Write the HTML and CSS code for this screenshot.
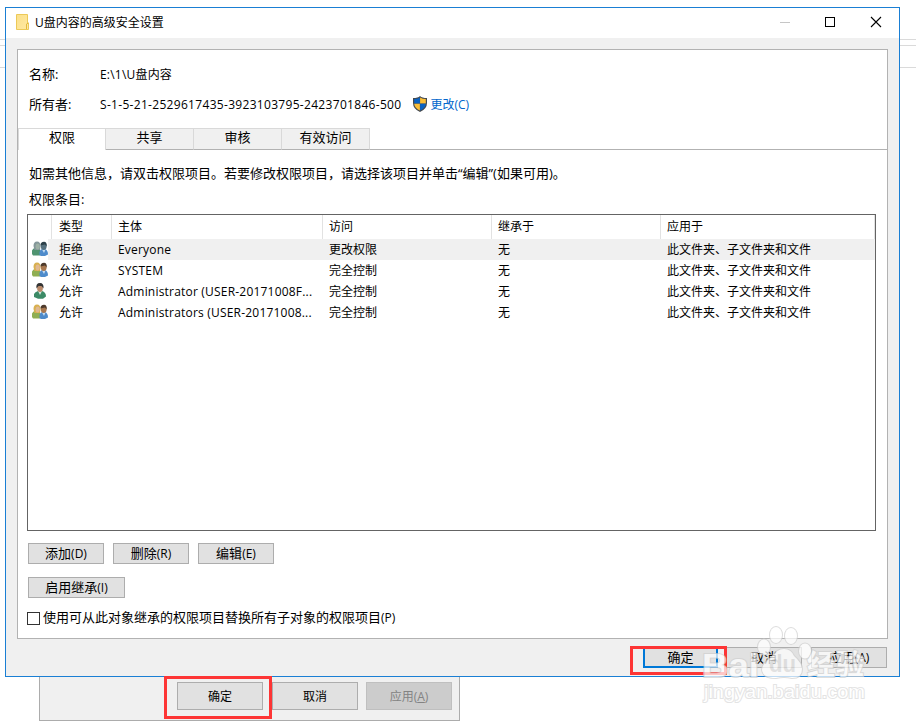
FILE: index.html
```html
<!DOCTYPE html>
<html lang="zh-CN">

<head>
    <meta charset="UTF-8">
    <meta name="viewport" content="width=device-width, initial-scale=1.0">
    <title>U盘内容的高级安全设置</title>
    <link rel="stylesheet" href="styles.css">
</head>

<body>
    <svg class="defs" width="0" height="0">
        <defs>
            <linearGradient id="folderFill" x1="0" y1="0" x2="1" y2="1">
                <stop offset="0" stop-color="#fbe08a" />
                <stop offset="1" stop-color="#ffe9a2" />
            </linearGradient>
            <symbol id="group" viewBox="0 0 16 16">
                <path d="M0 13V9.500Q1 7 3 7H6.500Q9 8 8.500 14.500H1z" fill="var(--shirt)" />
                <path d="M7.500 14V11Q8 8.500 10 8H13Q16 9 16 13.500L13 15H9z" fill="#4e8bcb" />
                <path d="M10 8.500L12 12L13.500 8.500z" fill="#c4dcf0" />
                <path d="M1.500 5Q1.500 .5 5 .5Q8.500 .5 8.500 5L8 9H2.500z" fill="var(--hair)" />
                <ellipse cx="5.700" cy="5.500" rx="2.100" ry="2.900" fill="var(--face)" />
                <ellipse cx="11.700" cy="5.200" rx="2.900" ry="3.800" fill="var(--face2)" />
                <path d="M8.500 4.500Q8.500 .8 12 .8Q15.200 1 14.700 5.500L13 3.500z" fill="var(--hair2)" />
            </symbol>
            <symbol id="person" viewBox="0 0 16 16">
                <path d="M2 14V11Q3 9 6 8H10Q14 9 14 13.500L11 15.800H6z" fill="#3c8a66" />
                <path d="M6 8L8 12L10 8z" fill="#d5e8de" />
                <ellipse cx="8" cy="5" rx="2.900" ry="4" fill="#b98a6a" />
                <path d="M4.500 5.500Q3.500 0 8 0Q12 0 11.500 5.500L9.500 3H6.500z" fill="#343434" />
            </symbol>
        </defs>
    </svg>

    <div class="backdrop">
        <div class="backdrop-line first"></div>
        <div class="backdrop-line second"></div>
        <div class="backdrop-line third"></div>
    </div>

    <!-- properties dialog behind -->
    <div class="properties">
        <button class="btn large" type="button">确定</button>
        <button class="btn large cancel" type="button">取消</button>
        <button class="btn large disabled" type="button" disabled>应用(<u>A</u>)</button>
    </div>

    <div class="window">
        <div class="titlebar">
            <svg class="folder" width="14" height="17" viewBox="0 0 14 17">
                <path d="M.5 .5H11.500V9H12.500V15.500H.5z" fill="url(#folderFill)" stroke="#ecc958" />
                <path d="M10.500 15V10L12.500 9" fill="none" stroke="#e2b93c" />
            </svg>
            <span class="title">U盘内容的高级安全设置</span>
            <svg class="controls" width="102" height="12" viewBox="0 0 102 12">
                <path d="M0 6.500H10" stroke="#c6c6c6" />
                <rect x="45.500" y="1.500" width="9" height="9" fill="none" stroke="#000" />
                <path d="M91 1L101 11M101 1L91 11" stroke="#000" stroke-width="1.100" />
            </svg>
        </div>

        <div class="panel">
            <div class="info">
                <span class="label">名称:</span>
                <span class="value path">E:\1\U盘内容</span>
            </div>
            <div class="info owner">
                <span class="label">所有者:</span>
                <span class="value sid">S-1-5-21-2529617435-3923103795-2423701846-500</span>
                <svg class="shield" width="14" height="16" viewBox="0 0 14 16">
                    <path d="M7 0Q9 2 14 2V7Q14 13 7 16Q0 13 0 7V2Q5 2 7 0z" fill="#44494f" />
                    <path d="M6.900 1.400V7.500H1.200V3Q4.500 3 6.900 1.400z" fill="#0a63c4" />
                    <path d="M7.100 1.400Q9.500 3 12.800 3V7.500H7.100z" fill="#fcbf36" />
                    <path d="M1.200 7.800H6.900V14.600Q1.500 12 1.200 7.800z" fill="#fcbf36" />
                    <path d="M7.100 7.800H12.800Q12.500 12 7.100 14.600z" fill="#0a63c4" />
                </svg>
                <a class="change">更改(C)</a>
            </div>

            <div class="tabs">
                <div class="tab active">权限</div>
                <div class="tab">共享</div>
                <div class="tab">审核</div>
                <div class="tab">有效访问</div>
                <div class="tab-rest"></div>
            </div>

            <div class="content">
                <p class="hint">如需其他信息，请双击权限项目。若要修改权限项目，请选择该项目并单击“编辑”(如果可用)。</p>
                <p class="list-label">权限条目:</p>

                <div class="list">
                    <div class="row head">
                        <span class="cell"></span>
                        <span class="cell">类型</span>
                        <span class="cell">主体</span>
                        <span class="cell">访问</span>
                        <span class="cell">继承于</span>
                        <span class="cell">应用于</span>
                    </div>
                    <div class="row selected">
                        <span class="cell"><svg class="who"><use href="#group" /></svg></span>
                        <span class="cell">拒绝</span>
                        <span class="cell name">Everyone</span>
                        <span class="cell">更改权限</span>
                        <span class="cell">无</span>
                        <span class="cell">此文件夹、子文件夹和文件</span>
                    </div>
                    <div class="row">
                        <span class="cell"><svg class="who"><use href="#group" /></svg></span>
                        <span class="cell">允许</span>
                        <span class="cell name">SYSTEM</span>
                        <span class="cell">完全控制</span>
                        <span class="cell">无</span>
                        <span class="cell">此文件夹、子文件夹和文件</span>
                    </div>
                    <div class="row">
                        <span class="cell"><svg class="who"><use href="#person" /></svg></span>
                        <span class="cell">允许</span>
                        <span class="cell name">Administrator (USER-20171008F...</span>
                        <span class="cell">完全控制</span>
                        <span class="cell">无</span>
                        <span class="cell">此文件夹、子文件夹和文件</span>
                    </div>
                    <div class="row">
                        <span class="cell"><svg class="who"><use href="#group" /></svg></span>
                        <span class="cell">允许</span>
                        <span class="cell name">Administrators (USER-20171008...</span>
                        <span class="cell">完全控制</span>
                        <span class="cell">无</span>
                        <span class="cell">此文件夹、子文件夹和文件</span>
                    </div>
                </div>

                <div class="actions">
                    <button class="btn" type="button">添加<small>(D)</small></button>
                    <button class="btn" type="button">删除<small>(R)</small></button>
                    <button class="btn" type="button">编辑<small>(E)</small></button>
                </div>
                <button class="btn inherit" type="button">启用继承<small>(I)</small></button>
                <label class="replace">
                    <span class="box"></span>
                    <span class="replace-text">使用可从此对象继承的权限项目替换所有子对象的权限项目<small>(P)</small></span>
                </label>
            </div>
        </div>

        <div class="footer">
            <button class="btn default" type="button">确定</button>
            <button class="btn" type="button">取消</button>
            <button class="btn" type="button">应用<small>(A)</small></button>
        </div>
    </div>

    <div class="mark mark-back"></div>
    <div class="mark mark-front"></div>

    <svg class="watermark" width="180" height="90" viewBox="0 0 180 90">
        <ellipse cx="76" cy="15" rx="6" ry="8" />
        <ellipse cx="91" cy="16" rx="6" ry="8" />
        <ellipse cx="64" cy="27" rx="6" ry="7.500" />
        <ellipse cx="105" cy="31" rx="6" ry="7.500" />
        <path d="M84 29Q91 29 94 36Q102 43 102 49Q102 58 92 58Q84 56 76 58Q63 58 62 50Q62 43 72 37Q77 29 84 29z" />
        <text class="wm-name" x="2" y="57" textLength="57" lengthAdjust="spacingAndGlyphs">Bai</text>
        <text class="wm-du" x="69" y="52" textLength="27" lengthAdjust="spacingAndGlyphs">du</text>
        <text class="wm-cn" x="107" y="55" textLength="57">经验</text>
        <text class="wm-url" x="4" y="78" textLength="161" lengthAdjust="spacingAndGlyphs">jingyan.baidu.com</text>
    </svg>
</body>

</html>
```
FILE: styles.css
```css
body {
    position: relative;
    width: 916px;
    height: 725px;
    margin: 0;
    overflow: hidden;
    background-color: #fff;
    color: #000;
    font-family: "Open Sans", "Noto Sans CJK SC", sans-serif;
    font-size: 12px;
}

.defs {
    position: absolute;
}

/* window behind everything */

.backdrop {
    position: absolute;
    top: 39px;
    left: 0;
    width: 916px;
}

.backdrop-line {
    height: 1px;
    background-color: #dadada;
}

.second {
    margin-top: 5px;
}

.third {
    margin-top: 21px;
}

.properties {
    position: absolute;
    left: 39px;
    top: 620px;
    display: flex;
    align-items: flex-end;
    box-sizing: border-box;
    width: 421px;
    height: 101px;
    padding: 0 7px 10px 137px;
    border: 1px solid #acacac;
    background-color: #f0f0f0;
}

.cancel {
    margin: 0 8px 0 9px;
}

/* main window */

.window {
    position: absolute;
    left: 5px;
    top: 7px;
    box-sizing: border-box;
    width: 895px;
    height: 670px;
    border: 1px solid #1a7fd4;
    background-color: #f0f0f0;
}

.titlebar {
    display: flex;
    align-items: center;
    height: 30px;
    padding: 0 17px 0 10px;
    background-color: #fff;
}

.folder {
    margin-bottom: 1px;
}

.controls {
    margin-bottom: 2px;
}

.title {
    flex: 1;
    margin-left: 5px;
    padding-bottom: 2px;
}

.panel {
    box-sizing: border-box;
    width: 871px;
    height: 590px;
    margin: 11px 0 0 11px;
    padding-top: 14px;
    border: 1px solid #b2b2b2;
    background-color: #fff;
}

.info {
    display: flex;
    align-items: center;
    height: 20px;
    padding-left: 11px;
}

.owner {
    margin-top: 10px;
}

.label {
    width: 71px;
    padding-bottom: 2px;
    font-size: 13px;
}

.path {
    letter-spacing: 0.2px;
}

.sid {
    letter-spacing: 0.31px;
}

.shield {
    margin-left: 12px;
}

.change {
    margin-left: 3px;
    color: #0066cc;
}

.tabs {
    display: flex;
    height: 22px;
    margin-top: 14px;
}

.tab {
    box-sizing: border-box;
    width: 88px;
    border: 1px solid #d9d9d9;
    border-left: none;
    border-bottom-color: #b2b2b2;
    background-color: #f0f0f0;
    font-size: 13px;
    line-height: 17px;
    text-align: center;
}

.tab.active {
    border-bottom: none;
    border-left: 1px solid #d9d9d9;
    background-color: #fff;
}

.tab-rest {
    flex: 1;
    border-bottom: 1px solid #b2b2b2;
}

.content {
    padding: 13px 9px 0;
}

.hint,
.list-label {
    height: 20px;
    margin: 0 0 0 2px;
    font-size: 13px;
    line-height: 20px;
    white-space: nowrap;
}

.list-label {
    margin-top: 6px;
}

.list {
    box-sizing: border-box;
    width: 849px;
    height: 317px;
    margin-top: 5px;
    border: 1px solid #646464;
}

.row {
    display: grid;
    grid-template-columns: 24px 60px 211px 169px 169px 214px;
    height: 21px;
    line-height: 21px;
}

.row.head {
    height: 24px;
    line-height: 24px;
}

.cell {
    box-sizing: border-box;
    padding-left: 6px;
    white-space: nowrap;
}

.cell:first-child {
    padding-left: 4px;
}

.cell:nth-child(2) {
    padding-left: 7px;
}

.head .cell {
    border-right: 1px solid #e2e2e2;
}

.name {
    letter-spacing: 0.2px;
}

.selected .cell:not(:first-child) {
    background-color: #f0f0f0;
}

.selected .cell:first-child {
    background: linear-gradient(to right, #fff 20px, #f0f0f0 20px);
}

.who {
    display: block;
    width: 16px;
    height: 16px;
    margin-top: 2px;
    --shirt: #8fae52;
    --hair: #d8b050;
    --face: #e0b890;
    --face2: #a87850;
    --hair2: #4d3a2c;
}

.selected .who {
    --shirt: #4f9470;
    --hair: #84979a;
    --face: #9db0a5;
    --face2: #56717f;
    --hair2: #2c4049;
}

.btn {
    box-sizing: border-box;
    flex: none;
    width: 76px;
    height: 21px;
    padding: 0;
    border: 1px solid #adadad;
    background-color: #e1e1e1;
    color: #000;
    font-family: inherit;
    font-size: 13px;
    line-height: 17px;
    text-align: center;
}

small {
    font-size: 12px;
}

.btn.large {
    width: 86px;
    height: 28px;
    font-size: 12px;
}

.btn.disabled {
    border-color: #bfbfbf;
    background-color: #ccc;
    color: #838383;
}

.actions {
    display: flex;
    gap: 9px;
    margin: 12px 0 13px 1px;
}

.inherit {
    display: block;
    width: 97px;
    margin-left: 1px;
}

.replace {
    display: flex;
    align-items: center;
    height: 20px;
    margin-top: 10px;
    font-size: 13px;
    line-height: 20px;
}

.replace-text {
    padding-bottom: 2px;
}

.box {
    box-sizing: border-box;
    width: 13px;
    height: 13px;
    margin-right: 3px;
    border: 1px solid #333;
}

.footer {
    display: flex;
    justify-content: flex-end;
    gap: 9px;
    padding: 8px 12px 0 0;
}

.btn.default {
    width: 75px;
    margin-right: -1px;
    border: 2px solid #0078d7;
}

/* red frames round the two OK buttons */

.mark {
    position: absolute;
    box-sizing: border-box;
    border: 3px solid #fd3535;
}

.mark-back {
    left: 164px;
    top: 676px;
    width: 108px;
    height: 43px;
}

.mark-front {
    left: 630px;
    top: 646px;
    width: 97px;
    height: 29px;
}

.watermark {
    position: absolute;
    left: 700px;
    top: 620px;
    fill: #fff;
    stroke: #d0d0d0;
    stroke-width: 2;
    paint-order: stroke;
    opacity: 0.72;
}

.wm-name,
.wm-du {
    font-family: "Liberation Sans", sans-serif;
    font-weight: bold;
    font-size: 34px;
}

.wm-du {
    fill: #dcdcdc;
    stroke: none;
    font-size: 24px;
}

.wm-cn {
    font-size: 28px;
    font-weight: bold;
}

.wm-url {
    stroke: #dadada;
    font-family: "Liberation Sans", sans-serif;
    font-size: 19px;
}
```
